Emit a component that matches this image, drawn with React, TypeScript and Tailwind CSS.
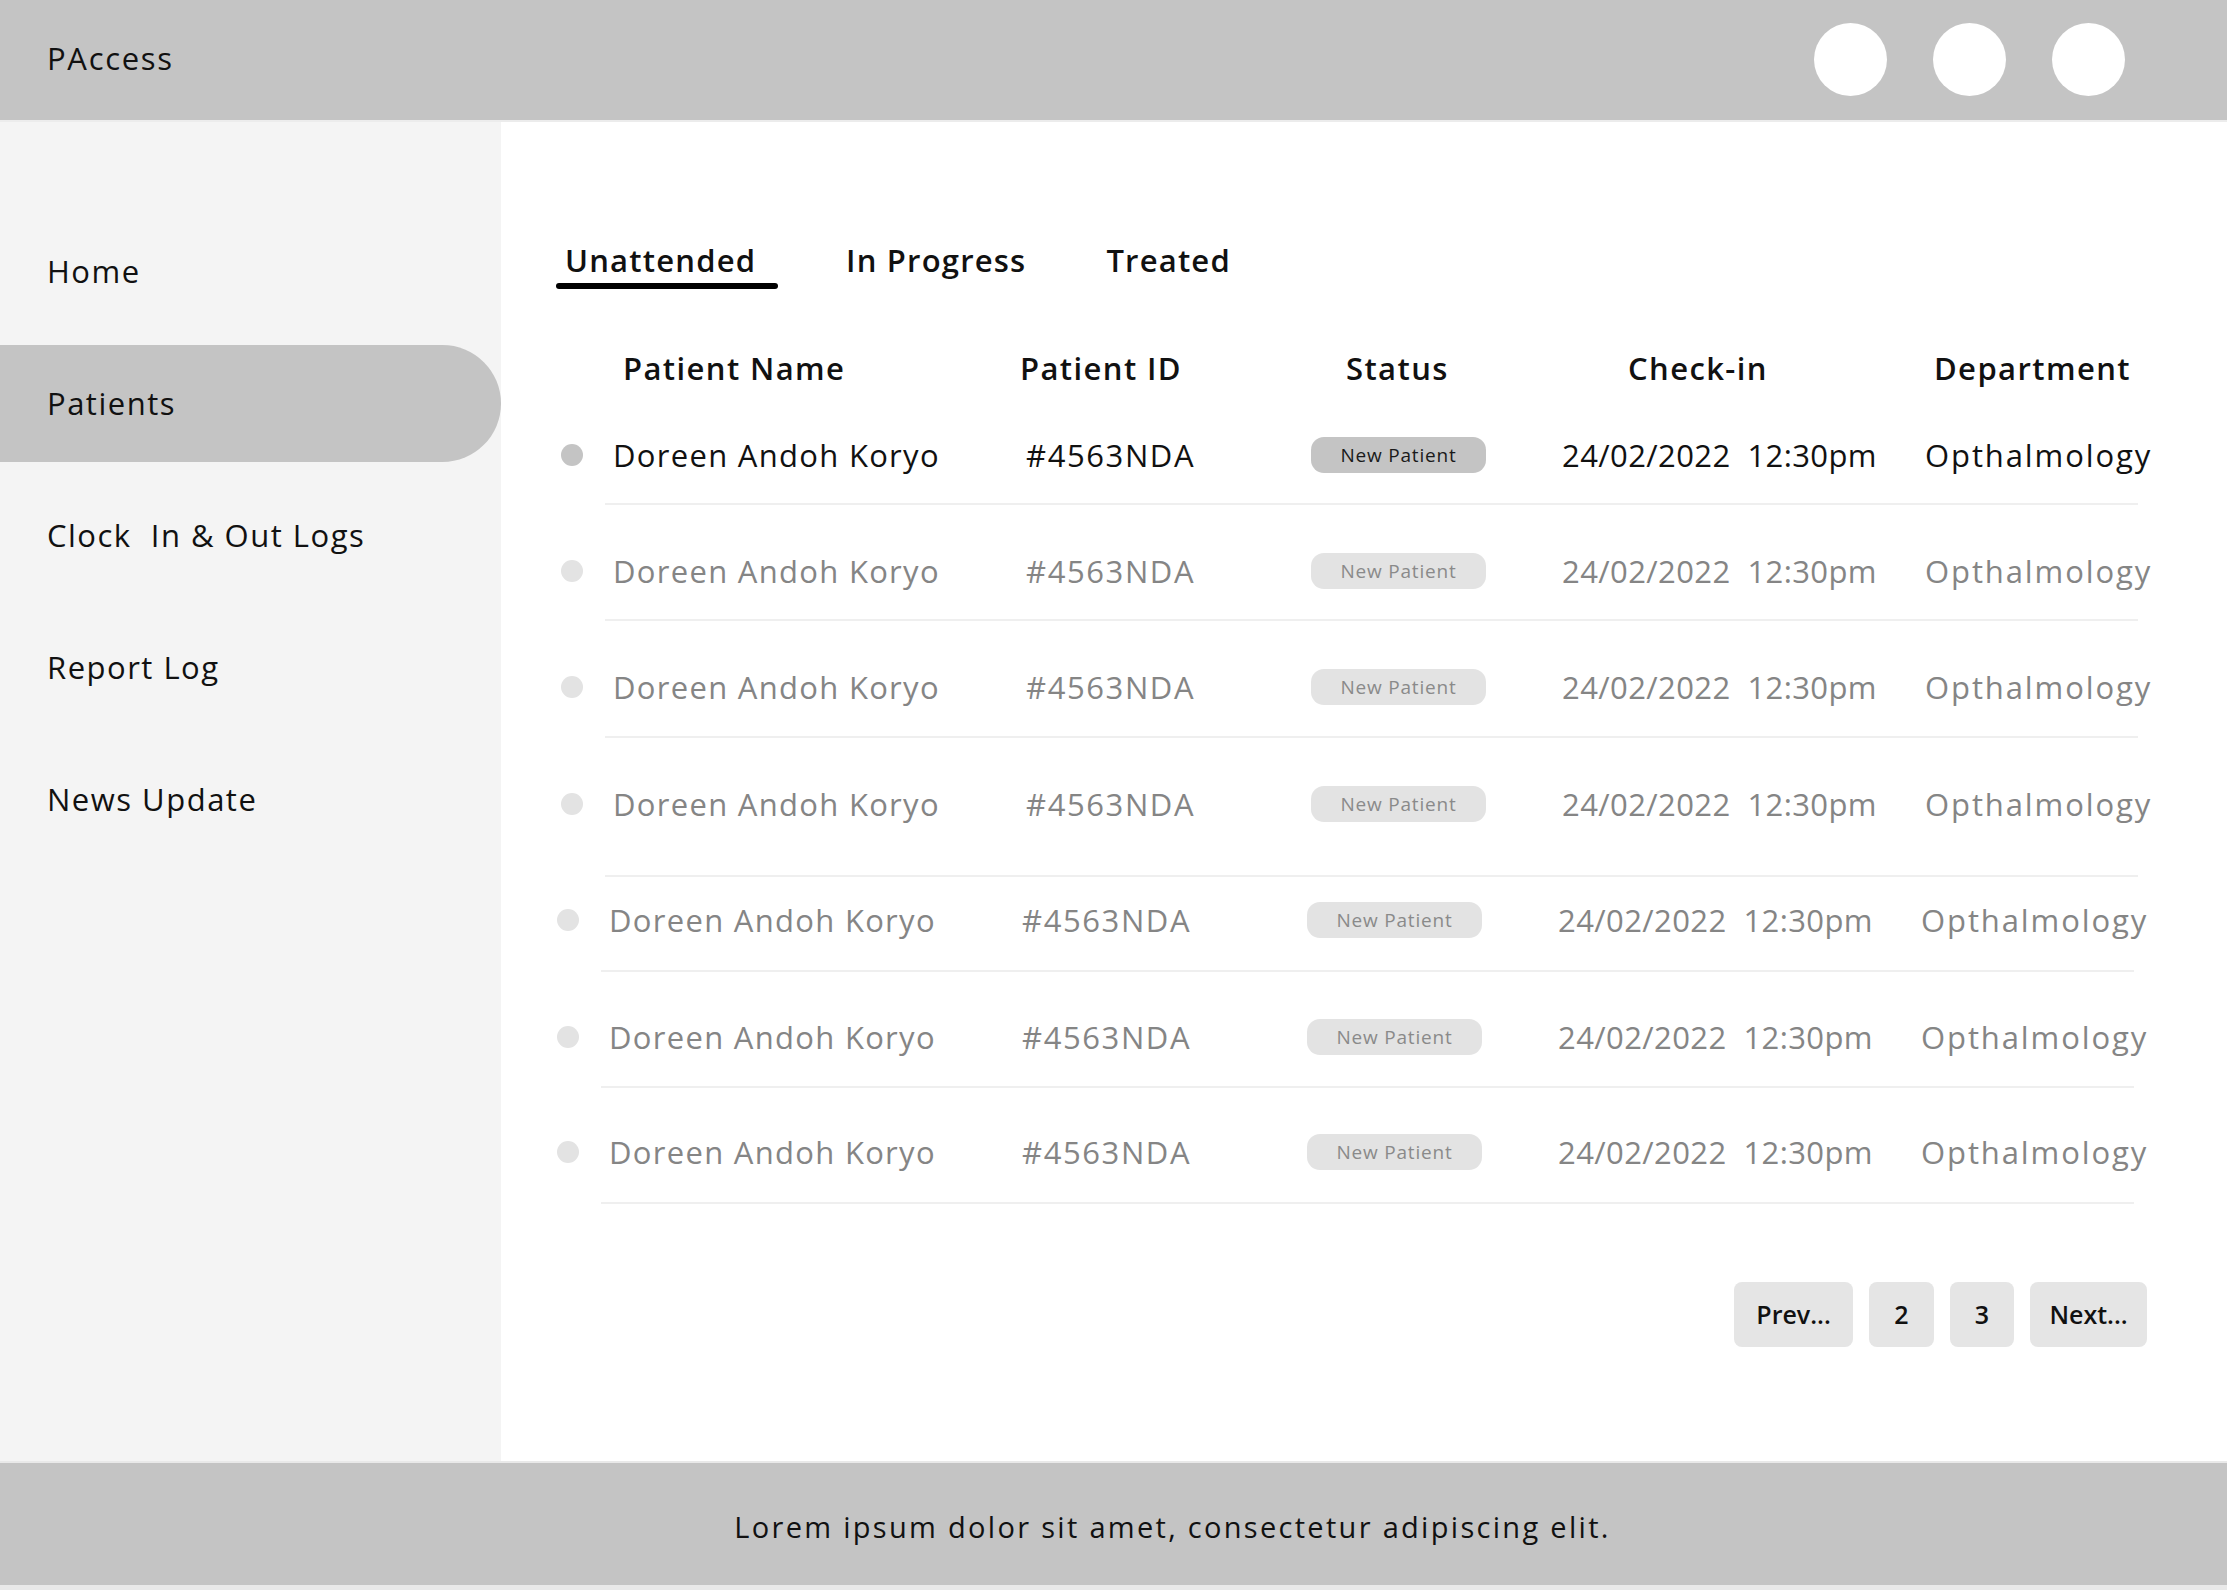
const rows = [
  { active: true, shift: false, mt: 'mt-[47px]', mb: 'mt-[28px]' },
  { active: false, shift: false, mt: 'mt-[46px]', mb: 'mt-[28px]' },
  { active: false, shift: false, mt: 'mt-[46px]', mb: 'mt-[29px]' },
  { active: false, shift: false, mt: 'mt-[46px]', mb: 'mt-[51px]' },
  { active: false, shift: true, mt: 'mt-[23px]', mb: 'mt-[30px]' },
  { active: false, shift: true, mt: 'mt-[45px]', mb: 'mt-[29px]' },
  { active: false, shift: true, mt: 'mt-[44px]', mb: 'mt-[30px]' },
]

const nav = ['Home', 'Patients', 'Clock\u00a0 In & Out Logs', 'Report Log', 'News Update']

function Row({ active, shift, mt, mb }: { active: boolean; shift: boolean; mt: string; mb: string }) {
  const text = active ? 'text-[#111111]' : 'text-[#858585]'
  return (
    <div className={`${mt} ${shift ? '-ml-[4px]' : ''}`}>
      <div className={`flex items-center h-[40px] text-[31px] ${text}`}>
        <div className="w-[57px] flex pl-[5px]">
          <div className={`w-[22px] h-[22px] rounded-full ${active ? 'bg-[#c4c4c4]' : 'bg-[#e3e3e3]'}`} />
        </div>
        <div className="w-[413px] whitespace-nowrap tracking-[1.3px]">Doreen Andoh Koryo</div>
        <div className="w-[285px] whitespace-nowrap tracking-[1.6px]">#4563NDA</div>
        <div className="w-[251px]">
          <div
            className={`w-[175px] h-[36px] rounded-[13px] flex items-center justify-center text-[19px] tracking-[0.8px] ${
              active ? 'bg-[#c4c4c4] text-[#1a1a1a]' : 'bg-[#e3e3e3] text-[#8a8a8a]'
            }`}
          >
            New Patient
          </div>
        </div>
        <div className="w-[363px] whitespace-pre tracking-[0.4px]">24/02/2022  12:30pm</div>
        <div className="whitespace-nowrap tracking-[1.9px]">Opthalmology</div>
      </div>
      <div className={`${mb} ml-[49px] w-[1533px] h-[2px] bg-[#efefef]`} />
    </div>
  )
}

export default function App() {
  return (
    <div className="w-[2227px] h-[1590px] flex flex-col bg-white font-['Open_Sans',sans-serif] text-[#111111]">
      <header className="h-[122px] shrink-0 bg-[#c4c4c4] border-b-2 border-[#ececec] flex items-center justify-between pl-[47px] pr-[102px]">
        <div className="text-[31px] tracking-[1.7px] -mt-[4px]">PAccess</div>
        <div className="flex gap-[46px] -mt-[2px]">
          <div className="w-[73px] h-[73px] rounded-full bg-white" />
          <div className="w-[73px] h-[73px] rounded-full bg-white" />
          <div className="w-[73px] h-[73px] rounded-full bg-white" />
        </div>
      </header>

      <div className="flex flex-1 min-h-0">
        <aside className="w-[501px] shrink-0 bg-[#f4f4f4] pt-[91px] flex flex-col gap-[15px]">
          {nav.map((item) => (
            <div
              key={item}
              className={`h-[117px] flex items-center pl-[47px] text-[31px] tracking-[1.5px] whitespace-pre ${
                item === 'Patients' ? 'bg-[#c4c4c4] rounded-r-full' : ''
              }`}
            >
              {item}
            </div>
          ))}
        </aside>

        <main className="flex-1 pl-[55px] pt-[118px]">
          <div className="flex items-start text-[31px] font-semibold tracking-[1.2px]">
            <div className="w-[222px]">
              <div className="h-[40px] flex items-center pl-[9px]">Unattended</div>
              <div className="mt-[3px] h-[6px] rounded-full bg-black" />
            </div>
            <div className="h-[40px] flex items-center ml-[68px]">In Progress</div>
            <div className="h-[40px] flex items-center ml-[80px]">Treated</div>
          </div>

          <div className="mt-[59px] flex items-center h-[40px] text-[31px] font-semibold tracking-[1.4px]">
            <div className="w-[464px] pl-[67px] whitespace-nowrap">Patient Name</div>
            <div className="w-[326px] whitespace-nowrap">Patient ID</div>
            <div className="w-[282px] whitespace-nowrap">Status</div>
            <div className="w-[306px] whitespace-nowrap">Check-in</div>
            <div className="whitespace-nowrap">Department</div>
          </div>

          {rows.map((r, i) => (
            <Row key={i} {...r} />
          ))}

          <div className="mt-[78px] flex justify-end pr-[80px] gap-[16px] text-[25px] font-semibold">
            <div className="w-[119px] h-[65px] rounded-[8px] bg-[#e5e5e5] flex items-center justify-center">Prev...</div>
            <div className="w-[65px] h-[65px] rounded-[8px] bg-[#e5e5e5] flex items-center justify-center">2</div>
            <div className="w-[64px] h-[65px] rounded-[8px] bg-[#e5e5e5] flex items-center justify-center">3</div>
            <div className="w-[117px] h-[65px] rounded-[8px] bg-[#e5e5e5] flex items-center justify-center">Next...</div>
          </div>
        </main>
      </div>

      <footer className="h-[129px] shrink-0 bg-[#c4c4c4] border-t-2 border-b-[5px] border-[#e9e9e9] flex items-center justify-center pl-[118px] pt-[6px] text-[29px] tracking-[2.3px]">
        Lorem ipsum dolor sit amet, consectetur adipiscing elit.
      </footer>
    </div>
  )
}
